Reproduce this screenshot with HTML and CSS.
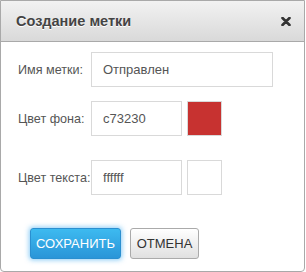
FILE: index.html
```html
<!doctype html>
<html>
<head>
    <meta charset="utf-8"/>
    <title>Создание метки</title>
    <link rel="stylesheet" href="styles.css">
</head>
<body>

<div class="dialog">
    <div class="dialog-head">
        <h2>Создание метки</h2>
        <svg class="close" width="10" height="9" viewBox="0 0 10 9"><path d="M1.5 1 L8.5 8 M8.5 1 L1.5 8" stroke="#333" stroke-width="2.6" stroke-linecap="round"/></svg>
    </div>
    <div class="dialog-body">
        <div class="from-item"><label>Имя метки:</label><input type="text" class="input input-wide" value="Отправлен"></div>
        <div class="from-item"><label>Цвет фона:</label><input type="text" class="input" value="c73230"><span class="swatch" style="background:#c73230"></span></div>
        <div class="from-item from-item-last"><label>Цвет текста:</label><input type="text" class="input" value="ffffff"><span class="swatch" style="background:#ffffff"></span></div>
        <div class="buttons">
            <button class="button button-save">СОХРАНИТЬ</button>
            <button class="button button-cancel">ОТМЕНА</button>
        </div>
    </div>
</div>

</body>
</html>
```

FILE: styles.css
```css
*{margin:0;padding:0;box-sizing:border-box}
body{font-family:"Liberation Sans",Arial,sans-serif;font-size:13px;color:#555;background:#fff}

.dialog{width:305px;height:272px;border:1px solid #a9a9a9;border-radius:0 0 4px 4px;background:#fff;overflow:hidden}
.dialog-head{height:41px;border-bottom:1px solid #a9a9a9;background:linear-gradient(#f2f2f2,#d9d9d9);display:flex;align-items:center;justify-content:space-between;padding:0 13px 0 15px}
.dialog-head h2{font-size:14.5px;font-weight:bold;color:#444;text-shadow:0 1px 0 #fff}
.close{display:block}

.dialog-body{padding:10px 0 0 17px}
.from-item{display:flex;align-items:center;margin-bottom:14px}
.from-item-last{margin-top:24px;margin-bottom:33px}
.from-item label{width:73px;flex-shrink:0;white-space:nowrap;color:#555;font-size:12.6px}
.input{border:1px solid #d9d9d9;height:35px;width:91px;padding:0 11px;font-family:"Liberation Sans",Arial,sans-serif;font-size:13px;color:#555;outline:none}
.input-wide{width:182px}
.swatch{display:block;width:35px;height:35px;margin-left:5px;border:1px solid #d9d9d9}

.buttons{display:flex;gap:9px;padding-left:12px}
.button{height:31px;border-radius:3px;font-family:"Liberation Sans",Arial,sans-serif;font-size:13px;padding:0}
.button-save{width:91px;color:#fff;border:1px solid #2a8fd0;background:linear-gradient(#3dbaf0,#2a95d8);box-shadow:0 0 5px 1px rgba(60,170,240,.6)}
.button-cancel{width:69px;color:#333;border:1px solid #aaa;background:linear-gradient(#fff,#e0e0e0)}
```
